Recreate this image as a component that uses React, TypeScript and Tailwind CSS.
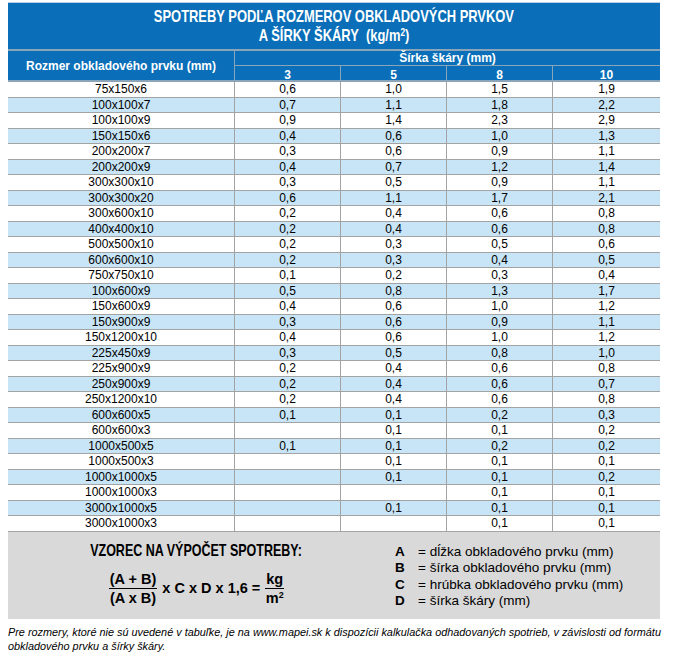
const rows: [string, string, string, string, string][] = [
  ['75x150x6', '0,6', '1,0', '1,5', '1,9'],
  ['100x100x7', '0,7', '1,1', '1,8', '2,2'],
  ['100x100x9', '0,9', '1,4', '2,3', '2,9'],
  ['150x150x6', '0,4', '0,6', '1,0', '1,3'],
  ['200x200x7', '0,3', '0,6', '0,9', '1,1'],
  ['200x200x9', '0,4', '0,7', '1,2', '1,4'],
  ['300x300x10', '0,3', '0,5', '0,9', '1,1'],
  ['300x300x20', '0,6', '1,1', '1,7', '2,1'],
  ['300x600x10', '0,2', '0,4', '0,6', '0,8'],
  ['400x400x10', '0,2', '0,4', '0,6', '0,8'],
  ['500x500x10', '0,2', '0,3', '0,5', '0,6'],
  ['600x600x10', '0,2', '0,3', '0,4', '0,5'],
  ['750x750x10', '0,1', '0,2', '0,3', '0,4'],
  ['100x600x9', '0,5', '0,8', '1,3', '1,7'],
  ['150x600x9', '0,4', '0,6', '1,0', '1,2'],
  ['150x900x9', '0,3', '0,6', '0,9', '1,1'],
  ['150x1200x10', '0,4', '0,6', '1,0', '1,2'],
  ['225x450x9', '0,3', '0,5', '0,8', '1,0'],
  ['225x900x9', '0,2', '0,4', '0,6', '0,8'],
  ['250x900x9', '0,2', '0,4', '0,6', '0,7'],
  ['250x1200x10', '0,2', '0,4', '0,6', '0,8'],
  ['600x600x5', '0,1', '0,1', '0,2', '0,3'],
  ['600x600x3', '', '0,1', '0,1', '0,2'],
  ['1000x500x5', '0,1', '0,1', '0,2', '0,2'],
  ['1000x500x3', '', '0,1', '0,1', '0,1'],
  ['1000x1000x5', '', '0,1', '0,1', '0,2'],
  ['1000x1000x3', '', '', '0,1', '0,1'],
  ['3000x1000x5', '', '0,1', '0,1', '0,1'],
  ['3000x1000x3', '', '', '0,1', '0,1'],
];

const legend = [
  ['A', '= dĺžka obkladového prvku (mm)'],
  ['B', '= šírka obkladového prvku (mm)'],
  ['C', '= hrúbka obkladového prvku (mm)'],
  ['D', '= šírka škáry (mm)'],
];

const cols = 'grid grid-cols-[227px_106px_106px_106px_107px]';

export default function App() {
  return (
    <div className="w-[683px] h-[654px] bg-white text-black font-['Liberation_Sans',Arial,sans-serif] pt-[2px] pl-[8px]">
      <div className="w-[652px]">
        {/* header */}
        <div className="bg-[#0a6fb8] text-white border-t border-[#b9cfe2]">
          <div className="h-[46px] flex flex-col items-center justify-center font-bold text-[17px] leading-[19px]">
            <div className="inline-block scale-x-[0.76] whitespace-nowrap">SPOTREBY PODĽA ROZMEROV OBKLADOVÝCH PRVKOV</div>
            <div className="inline-block scale-x-[0.76] whitespace-nowrap">
              A ŠÍRKY ŠKÁRY&nbsp;&nbsp;(kg/m<span className="relative -top-[5px] text-[11px] leading-none">2</span>)
            </div>
          </div>
          <div className="flex border-t-2 border-[#8aa4ba] border-b-2 border-b-[#8aa4ba] font-bold text-[12px]">
            <div className="w-[227px] flex items-center justify-center border-r border-[#8aa4ba]">
              Rozmer obkladového prvku (mm)
            </div>
            <div className="flex-1 flex flex-col">
              <div className="h-[15px] flex items-center justify-center border-b border-[#8aa4ba]">
                Šírka škáry (mm)
              </div>
              <div className="h-[14px] grid grid-cols-[106px_106px_106px_107px]">
                {['3', '5', '8', '10'].map((n, i) => (
                  <div key={n} className={`flex items-center justify-center ${i < 3 ? 'border-r border-[#8aa4ba]' : ''}`}>
                    {n}
                  </div>
                ))}
              </div>
            </div>
          </div>
        </div>

        {/* rows */}
        <div className="text-[12px]">
          {rows.map((r, i) => (
            <div
              key={r[0]}
              className={`${cols} h-[15.5px] border-b border-[#a3a3a3] ${i % 2 === 1 ? 'bg-[#c8e5f7]' : 'bg-white'}`}
            >
              {r.map((c, j) => (
                <div
                  key={j}
                  className={`flex items-center justify-center leading-none ${j < 4 ? 'border-r border-[#a3a3a3]' : ''}`}
                >
                  {c}
                </div>
              ))}
            </div>
          ))}
        </div>

        {/* formula */}
        <div className="h-[87px] bg-[#d9d9d9] flex">
          <div className="w-[377px] flex flex-col items-center pt-[10px]">
            <div className="inline-block scale-x-[0.735] whitespace-nowrap font-bold text-[17px] leading-[18px]">
              VZOREC NA VÝPOČET SPOTREBY:
            </div>
            <div className="flex items-center font-bold text-[14.5px] mt-[10px]">
              <div className="flex flex-col items-center">
                <div className="leading-[18px] px-[1px]">(A + B)</div>
                <div className="h-[1.5px] w-full bg-black"></div>
                <div className="leading-[19px]">(A x B)</div>
              </div>
              <div className="mx-[5px]">x C x D x 1,6 =</div>
              <div className="flex flex-col items-center">
                <div className="leading-[18px] px-[1px]">kg</div>
                <div className="h-[1.5px] w-full bg-black"></div>
                <div className="leading-[19px]">
                  m<span className="relative -top-[5px] text-[9px] leading-none">2</span>
                </div>
              </div>
            </div>
          </div>
          <div className="flex flex-col pt-[12px] pl-[10px] text-[13.5px] leading-[16.5px]">
            {legend.map(([k, v]) => (
              <div key={k} className="flex">
                <span className="w-[23px] font-bold">{k}</span>
                <span>{v}</span>
              </div>
            ))}
          </div>
        </div>

        {/* footnote */}
        <p className="mt-[6px] italic text-[10.87px] leading-[14px] whitespace-nowrap">
          Pre rozmery, ktoré nie sú uvedené v tabuľke, je na www.mapei.sk k dispozícii kalkulačka odhadovaných spotrieb, v závislosti od formátu
          <br />
          obkladového prvku a šírky škáry.
        </p>
      </div>
    </div>
  );
}
